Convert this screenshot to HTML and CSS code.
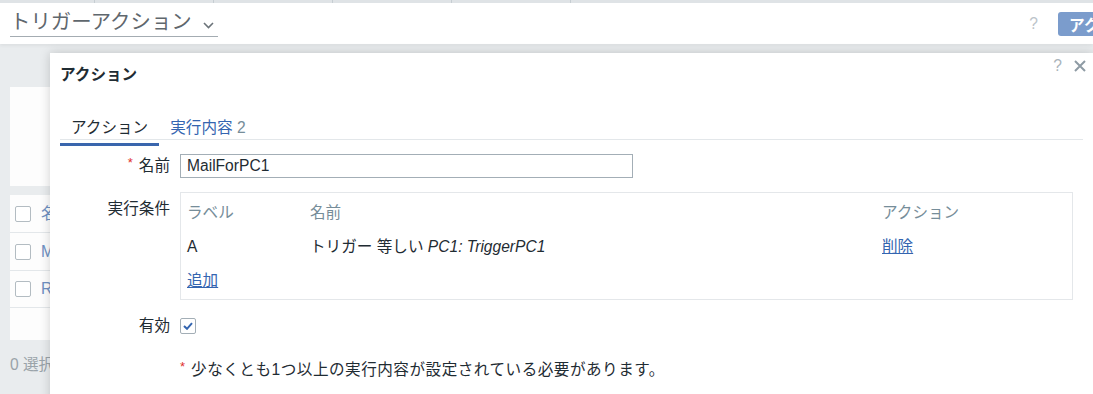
FILE: index.html
```html
<!DOCTYPE html>
<html lang="ja">
<head>
    <meta charset="UTF-8">
    <meta name="viewport" content="width=device-width, initial-scale=1.0">
    <title>トリガーアクション</title>
    <link rel="stylesheet" href="styles.css">
</head>
<body>
    <div class="top-strip"><span></span><span></span><span></span><span></span><span></span></div>

    <header class="page-header">
        <h1 class="page-title">
            <span>トリガーアクション</span>
            <svg class="chevron" width="11" height="7" viewBox="0 0 11 7"><polyline points="1,1 5.5,5.5 10,1" fill="none" stroke="#6b7379" stroke-width="1.6"/></svg>
        </h1>
        <div class="header-controls">
            <span class="help">?</span>
            <button class="btn-primary">アクションの作成</button>
        </div>
    </header>

    <main class="page-body">
        <div class="filter-panel"></div>
        <div class="list-table">
            <div class="list-row"><span class="checkbox"></span><a class="bg-link">名前</a></div>
            <div class="list-row"><span class="checkbox"></span><a class="bg-link">MailForPC1</a></div>
            <div class="list-row row-short"><span class="checkbox"></span><a class="bg-link">Report problems to Zabbix administrators</a></div>
            <div class="list-row row-empty"></div>
        </div>
        <div class="list-footer">0 選択</div>
    </main>

    <div class="dialog">
        <div class="dialog-header">
            <h4 class="dialog-title">アクション</h4>
            <div class="dialog-controls">
                <span class="dialog-help">?</span>
                <svg class="dialog-close" width="12" height="12" viewBox="0 0 12 12"><path d="M1 1L11 11M11 1L1 11" stroke="#8e9ba4" stroke-width="2"/></svg>
            </div>
        </div>

        <div class="dialog-body">
            <ul class="tabs">
                <li class="tab active">アクション</li>
                <li class="tab"><a class="tab-link">実行内容</a> <span class="tab-count">2</span></li>
            </ul>

            <div class="form-grid">
                <label class="form-label"><span class="required">*</span>名前</label>
                <div class="form-field">
                    <input class="text-input" type="text" value="MailForPC1">
                </div>

                <label class="form-label label-top">実行条件</label>
                <div class="form-field">
                    <div class="conditions">
                        <table class="conditions-table">
                            <colgroup><col class="col-label"><col class="col-name"><col></colgroup>
                            <tr><th>ラベル</th><th>名前</th><th>アクション</th></tr>
                            <tr><td>A</td><td>トリガー 等しい <em>PC1: TriggerPC1</em></td><td><a class="link">削除</a></td></tr>
                            <tr><td colspan="3"><a class="link">追加</a></td></tr>
                        </table>
                    </div>
                </div>

                <label class="form-label">有効</label>
                <div class="form-field">
                    <span class="checkbox checked">
                        <svg width="10" height="8" viewBox="0 0 10 8"><polyline points="1,4 4,6.8 9,1.2" fill="none" stroke="#3465b0" stroke-width="2"/></svg>
                    </span>
                </div>

                <div class="form-note"><span class="required">*</span>少なくとも1つ以上の実行内容が設定されている必要があります。</div>
            </div>
        </div>
    </div>
</body>
</html>
```

FILE: styles.css
```css
* {
    margin: 0;
    padding: 0;
    box-sizing: border-box;
}

html, body {
    height: 100%;
    overflow: hidden;
}

body {
    position: relative;
    font-family: "Liberation Sans", "Noto Sans CJK JP", sans-serif;
    font-size: 15.6px;
    line-height: 20px;
    color: #1f2c33;
    background-color: #e9ecee;
}

/* top navigation remainder */
.top-strip {
    display: flex;
    height: 3px;
    background-color: #dfe3e6;
}

.top-strip span {
    width: 119px;
    border-right: 1px solid #c6cdd2;
}

.top-strip span:first-child {
    width: 95px;
}

.page-header {
    display: flex;
    align-items: center;
    height: 41px;
    padding: 0 10px;
    background-color: #ffffff;
    box-shadow: 0 2px 3px rgba(0, 0, 0, 0.05);
}

.page-title {
    display: flex;
    align-items: center;
    gap: 11px;
    padding-right: 4px;
    padding-bottom: 2px;
    font-size: 20.4px;
    font-weight: normal;
    line-height: 24px;
    color: #5f676d;
    border-bottom: 1px solid #a4acb2;
}

.chevron {
    margin-top: 6px;
}

.header-controls {
    display: flex;
    align-items: center;
    gap: 20px;
    margin-left: auto;
    margin-right: -121px;
}

.help {
    color: #bcc4ca;
}

.btn-primary {
    flex-shrink: 0;
    height: 24px;
    padding: 0 11px;
    font-family: inherit;
    font-size: 15.6px;
    font-weight: bold;
    color: #ffffff;
    background-color: #7b9ccc;
    border: none;
    border-radius: 3px;
}

/* list behind the dialog */
.page-body {
    padding: 0 10px;
}

.filter-panel {
    height: 99px;
    margin-top: 43px;
    background-color: #fdfdfd;
}

.list-table {
    margin-top: 9px;
    background-color: #fdfdfd;
}

.list-row {
    display: flex;
    align-items: center;
    gap: 10px;
    height: 38px;
    padding-left: 5px;
    border-bottom: 1px solid #e3e7ea;
}

.list-row.row-short { height: 37px; }
.list-row.row-empty { height: 32px; border-bottom: none; }

.checkbox {
    display: flex;
    align-items: center;
    justify-content: center;
    width: 16px;
    height: 16px;
    background-color: #ffffff;
    border: 1px solid #b3bcc2;
    border-radius: 2px;
}

.bg-link {
    color: #6f90c2;
    white-space: nowrap;
}

.list-footer {
    margin-top: 15px;
    color: #9aa3a9;
}

/* dialog */
.dialog {
    position: absolute;
    top: 53px;
    left: 50px;
    right: 0;
    bottom: -40px;
    background-color: #ffffff;
    box-shadow: 0 0 10px rgba(0, 0, 0, 0.18);
}

.dialog-header {
    display: flex;
    align-items: flex-start;
    padding: 0 7px 15px 10px;
}

.dialog-title {
    padding-top: 12px;
    font-size: 15.6px;
    font-weight: bold;
    line-height: 20px;
}

.dialog-controls {
    display: flex;
    align-items: center;
    gap: 12px;
    margin-top: 3px;
    margin-left: auto;
}

.dialog-help {
    color: #aab4bb;
}

.dialog-body {
    padding: 10px 10px 0;
}

.tabs {
    display: flex;
    list-style: none;
    margin-bottom: 14px;
    border-bottom: 1px solid #e3e7ea;
}

.tab {
    padding: 8px 11px 5px;
    margin-bottom: -7px;
    border-bottom: 3px solid transparent;
    white-space: nowrap;
}

.tab.active {
    border-bottom-color: #3a66ad;
}

.tab-link {
    color: #3465b0;
}

.tab-count {
    color: #768d99;
}

.form-grid {
    display: grid;
    grid-template-columns: 110px 1fr;
    column-gap: 10px;
    row-gap: 14px;
}

.form-label {
    text-align: right;
    line-height: 24px;
}

.form-label.label-top {
    padding-top: 5px;
}

.required {
    margin-right: 6px;
    font-size: 13px;
    vertical-align: top;
    line-height: 18px;
    color: #e0302c;
}

.form-field {
    display: flex;
    align-items: center;
    min-height: 24px;
}

.text-input {
    width: 453px;
    height: 24px;
    padding: 0 6px;
    font-family: inherit;
    font-size: 15.6px;
    color: #1f2c33;
    border: 1px solid #a3aeb6;
    outline: none;
}

.conditions {
    width: 893px;
    padding: 3px 6px 1px;
    border: 1px solid #e4e7ea;
}

.conditions-table {
    width: 100%;
    border-collapse: collapse;
}

.conditions-table .col-label { width: 123px; }
.conditions-table .col-name { width: 572px; }

.conditions-table th,
.conditions-table td {
    padding: 7px 0;
    line-height: 20px;
    text-align: left;
    font-weight: normal;
    white-space: nowrap;
}

.conditions-table th {
    color: #768d99;
}

.link {
    color: #3465b0;
    text-decoration: underline;
}

.checkbox.checked {
    border-color: #a3aeb6;
}

.form-note {
    grid-column: 2;
    padding-top: 6px;
    line-height: 24px;
    letter-spacing: 0.5px;
}

.form-note .required {
    letter-spacing: 0;
}
```
